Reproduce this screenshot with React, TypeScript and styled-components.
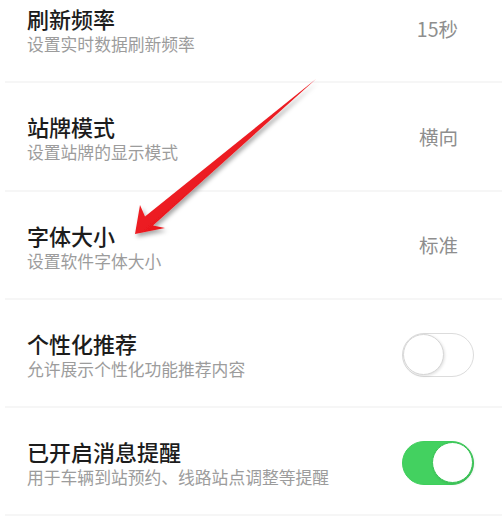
import React from 'react';
import styled, { createGlobalStyle } from 'styled-components';

const GlobalStyle = createGlobalStyle`
  html, body {
    margin: 0;
    padding: 0;
    background: #ffffff;
  }
  body {
    font-family: 'Noto Sans CJK SC', 'Noto Sans', sans-serif;
    overflow: hidden;
  }
`;

const Page = styled.div`
  position: relative;
  width: 502px;
  height: 516px;
  overflow: hidden;
  background: #ffffff;
`;

const List = styled.div`
  display: flex;
  flex-direction: column;
  margin-top: -25px;
`;

const Row = styled.div`
  display: flex;
  align-items: center;
  box-sizing: border-box;
  height: 108.3px;
  margin-left: 5px;
  padding: 0 28px 0 22px;
  border-bottom: 2px solid #f6f6f6;
`;

const Texts = styled.div`
  flex: 1;
  display: flex;
  flex-direction: column;
  padding-top: 3px;
`;

const Title = styled.div`
  font-size: 22px;
  line-height: 28px;
  font-weight: 500;
  color: #1c1c1c;
`;

const SubTitle = styled.div`
  margin-top: 1px;
  font-size: 16.8px;
  line-height: 22px;
  color: #9c9c9c;
`;

const Value = styled.div`
  margin-right: 16px;
  font-size: 19.5px;
  color: #8e8e8e;
`;

const Track = styled.div<{ on: boolean }>`
  display: flex;
  justify-content: ${({ on }) => (on ? 'flex-end' : 'flex-start')};
  box-sizing: border-box;
  width: 72px;
  height: 44px;
  margin-top: 3px;
  border-radius: 22px;
  border: 1.5px solid ${({ on }) => (on ? '#3fcf5c' : '#dcdcdc')};
  background: ${({ on }) => (on ? '#43d160' : '#ffffff')};
`;

const Knob = styled.div<{ on: boolean }>`
  box-sizing: border-box;
  width: 41px;
  height: 41px;
  border-radius: 50%;
  background: #ffffff;
  border: 1px solid ${({ on }) => (on ? '#38c455' : '#d6d6d6')};
  box-shadow: 1px 1px 3px rgba(0, 0, 0, 0.12);
`;

const ArrowLayer = styled.svg`
  position: absolute;
  left: 0;
  top: 0;
  pointer-events: none;
`;

type Item = {
  title: string;
  sub: string;
  value?: string;
  toggle?: boolean;
};

const ITEMS: Item[] = [
  { title: '刷新频率', sub: '设置实时数据刷新频率', value: '15秒' },
  { title: '站牌模式', sub: '设置站牌的显示模式', value: '横向' },
  { title: '字体大小', sub: '设置软件字体大小', value: '标准' },
  { title: '个性化推荐', sub: '允许展示个性化功能推荐内容', toggle: false },
  { title: '已开启消息提醒', sub: '用于车辆到站预约、线路站点调整等提醒', toggle: true },
];

const Arrow = () => (
  <ArrowLayer width="502" height="516" viewBox="0 0 502 516">
    <defs>
      <linearGradient id="redGrad" x1="0" y1="0" x2="1" y2="1">
        <stop offset="0%" stopColor="#ff3b3b" />
        <stop offset="60%" stopColor="#e8141b" />
        <stop offset="100%" stopColor="#c10a10" />
      </linearGradient>
      <filter id="arrowShadow" x="-20%" y="-20%" width="140%" height="140%">
        <feDropShadow dx="2" dy="3" stdDeviation="2" floodColor="#000" floodOpacity="0.35" />
      </filter>
    </defs>
    <path
      d="M135 234 L165 228 L153 225.5 L316 79 L145 216.5 L140 205 Z"
      fill="url(#redGrad)"
      filter="url(#arrowShadow)"
    />
  </ArrowLayer>
);

const App = () => {
  return (
    <Page>
      <GlobalStyle />
      <List>
        {ITEMS.map((item) => (
          <Row key={item.title}>
            <Texts>
              <Title>{item.title}</Title>
              <SubTitle>{item.sub}</SubTitle>
            </Texts>
            {item.value && <Value>{item.value}</Value>}
            {item.toggle !== undefined && (
              <Track on={item.toggle}>
                <Knob on={item.toggle} />
              </Track>
            )}
          </Row>
        ))}
      </List>
      <Arrow />
    </Page>
  );
};

export default App;
